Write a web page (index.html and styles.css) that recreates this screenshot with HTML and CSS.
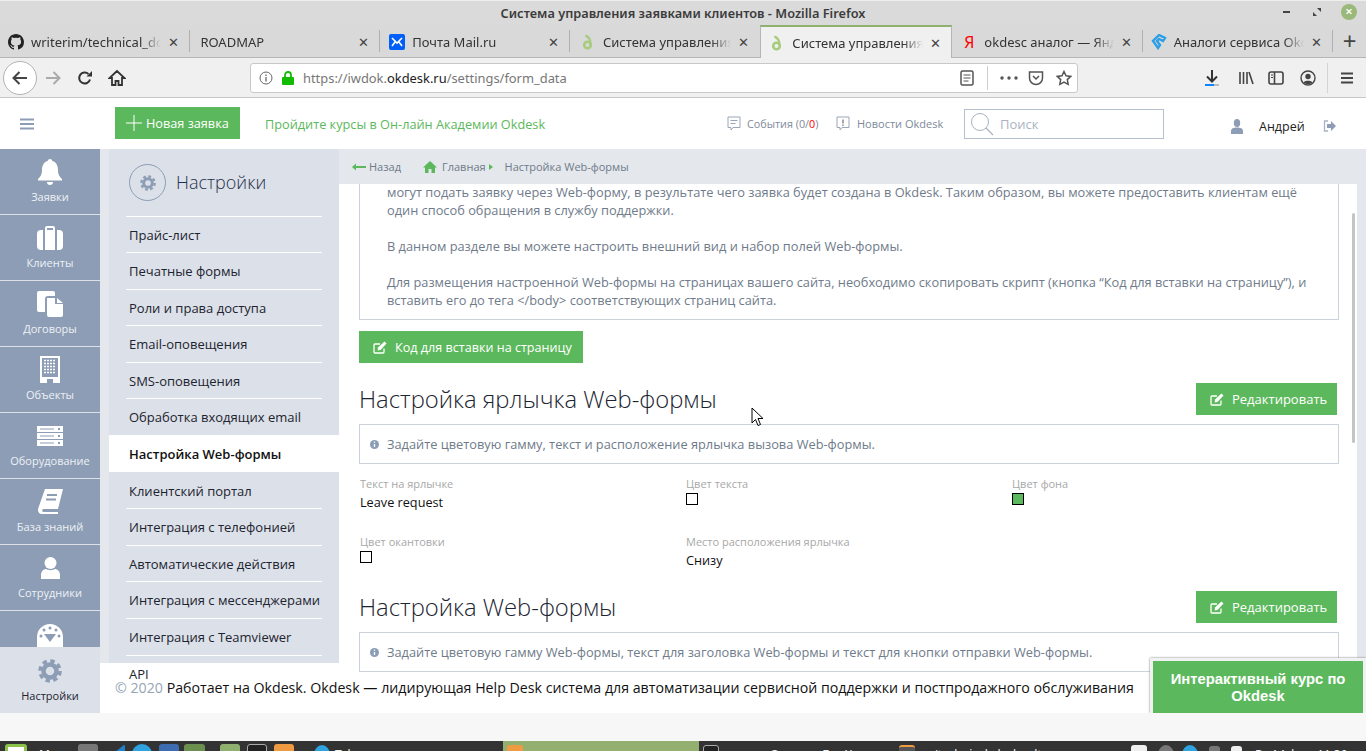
FILE: index.html
```html
<!DOCTYPE html>
<html lang="ru">
<head>
    <meta charset="UTF-8">
    <meta name="viewport" content="width=device-width, initial-scale=1.0">
    <title>Система управления заявками клиентов</title>
    <link rel="stylesheet" href="styles.css">
</head>
<body>
    <!-- Firefox -->
    <div class="titlebar">
        <span class="titlebar-text">Система управления заявками клиентов - Mozilla Firefox</span>
        <div class="win-btns">
            <svg width="12" height="12" viewBox="0 0 12 12"><path d="M2 6h7" stroke="#444" stroke-width="2"/></svg>
            <svg width="12" height="12" viewBox="0 0 12 12"><path d="M6 2h4v4zM2 6v4h4z" fill="#444"/></svg>
            <span class="win-close">×</span>
        </div>
    </div>
    <div class="tabs">
        <div class="tab">
            <svg class="fav" viewBox="0 0 16 16"><path fill="#222" d="M8 0C3.6 0 0 3.6 0 8c0 3.5 2.3 6.5 5.5 7.6.4.1.5-.2.5-.4v-1.4c-2.2.5-2.7-1-2.7-1-.4-.9-.9-1.2-.9-1.2-.7-.5.1-.5.1-.5.8.1 1.2.8 1.2.8.7 1.2 1.9.9 2.3.7.1-.5.3-.9.5-1.1-1.8-.2-3.6-.9-3.6-4 0-.9.3-1.6.8-2.1-.1-.2-.4-1 .1-2.1 0 0 .7-.2 2.2.8a7.600 7.600 0 0 1 4 0c1.500-1 2.200-.8 2.200-.8.400 1.100.200 1.900.100 2.100.500.600.800 1.300.800 2.100 0 3.100-1.900 3.700-3.700 3.900.300.300.600.800.600 1.500v2.200c0 .200.100.500.600.400A8 8 0 0 0 16 8c0-4.400-3.600-8-8-8z"/></svg>
            <span class="tab-title">writerim/technical_documentation</span><span class="tab-x">✕</span>
        </div>
        <div class="tab">
            <span class="tab-title">ROADMAP</span><span class="tab-x">✕</span>
        </div>
        <div class="tab">
            <svg class="fav" viewBox="0 0 16 16"><rect width="16" height="16" rx="2" fill="#005ff9"/><path d="M3 4l5 5 5-5M3 12l3-4M13 12l-3-4" stroke="#fff" stroke-width="1.600" fill="none"/></svg>
            <span class="tab-title">Почта Mail.ru</span><span class="tab-x">✕</span>
        </div>
        <div class="tab">
            <svg class="fav" viewBox="0 0 16 16"><circle cx="7.500" cy="11" r="3.300" fill="none" stroke="#a6cc7c" stroke-width="2.600"/><path d="M5.500 .5c4 1 6.500 4.500 6 10.500h-2c.5-4-1.500-7-4.500-8.500z" fill="#a6cc7c"/></svg>
            <span class="tab-title">Система управления заявками</span><span class="tab-x">✕</span>
        </div>
        <div class="tab tab-active">
            <svg class="fav" viewBox="0 0 16 16"><circle cx="7.500" cy="11" r="3.300" fill="none" stroke="#a6cc7c" stroke-width="2.600"/><path d="M5.500 .5c4 1 6.500 4.500 6 10.500h-2c.5-4-1.500-7-4.500-8.500z" fill="#a6cc7c"/></svg>
            <span class="tab-title">Система управления заявками</span><span class="tab-x">✕</span>
        </div>
        <div class="tab">
            <span class="fav fav-ya">Я</span>
            <span class="tab-title">okdesc аналог — Яндекс</span><span class="tab-x">✕</span>
        </div>
        <div class="tab">
            <svg class="fav" viewBox="0 0 16 16"><path d="M8 1L2 7l5 7 2-3-3-4 2-2 4 2 2-3z" fill="none" stroke="#2b9fe6" stroke-width="2.400"/></svg>
            <span class="tab-title">Аналоги сервиса Okdesk</span><span class="tab-x">✕</span>
        </div>
        <span class="tab-new">+</span>
    </div>
    <div class="toolbar">
        <span class="back-btn">
            <svg width="18" height="18" viewBox="0 0 18 18"><path d="M16 9H3M8.500 3L2.500 9l6 6" fill="none" stroke="#444" stroke-width="2"/></svg>
        </span>
        <svg class="tool-forward" width="18" height="18" viewBox="0 0 18 18"><path d="M2 9h13M9.500 3l6 6-6 6" fill="none" stroke="#aaa" stroke-width="2"/></svg>
        <svg class="tool-reload" width="16" height="16" viewBox="0 0 16 16"><path d="M13 9.500A5.500 5.500 0 1 1 11.500 4" fill="none" stroke="#333" stroke-width="2"/><path d="M9.500 6.500H15V1z" fill="#333"/></svg>
        <svg class="tool-home" width="18" height="18" viewBox="0 0 18 18"><path d="M9 2L1.500 9H4v7h3.500v-4h3v4H14V9h2.500z" fill="none" stroke="#333" stroke-width="1.800"/></svg>
        <div class="urlbar">
            <svg class="url-info" width="14" height="14" viewBox="0 0 14 14"><circle cx="7" cy="7" r="6" fill="none" stroke="#666"/><path d="M7 6v4.500M7 3.500v1.500" stroke="#666" stroke-width="1.300"/></svg>
            <svg class="url-lock" width="12" height="14" viewBox="0 0 12 14"><rect y="6" width="12" height="8" rx="1" fill="#12bc00"/><path d="M3 6V4a3 3 0 0 1 6 0v2" fill="none" stroke="#12bc00" stroke-width="1.800"/></svg>
            <span class="url-text">https://iwdok.<b>okdesk.ru</b>/settings/form_data</span>
            <svg class="url-reader" width="14" height="16" viewBox="0 0 14 16"><rect x="1" y="1" width="12" height="14" rx="1.500" fill="none" stroke="#555" stroke-width="1.500"/><path d="M3.500 5h7M3.500 8h7M3.500 11h5" stroke="#555"/></svg>
            <span class="url-sep"></span>
            <svg class="url-dots" width="18" height="4" viewBox="0 0 18 4"><circle cx="2" cy="2" r="1.700" fill="#555"/><circle cx="9" cy="2" r="1.700" fill="#555"/><circle cx="16" cy="2" r="1.700" fill="#555"/></svg>
            <svg class="url-pocket" width="16" height="16" viewBox="0 0 16 16"><path d="M1.500 2h13v6a6.500 6.500 0 0 1-13 0z" fill="none" stroke="#555" stroke-width="1.500"/><path d="M5 6l3 3 3-3" fill="none" stroke="#555" stroke-width="1.500"/></svg>
            <svg class="url-star" width="16" height="16" viewBox="0 0 16 16"><path d="M8 1.500l2 4.300 4.700.6-3.400 3.200.9 4.700L8 12l-4.200 2.300.9-4.700L1.300 6.400 6 5.800z" fill="none" stroke="#555" stroke-width="1.500"/></svg>
        </div>
        <div class="tool-right">
            <svg width="16" height="20" viewBox="0 0 16 20"><path d="M8 2v11M3 8.500l5 5 5-5" fill="none" stroke="#333" stroke-width="2"/><path d="M1 17h9" stroke="#0a84ff" stroke-width="2"/><path d="M10 17h5" stroke="#bbb" stroke-width="2"/></svg>
            <svg width="16" height="16" viewBox="0 0 16 16"><path d="M2 2v12M5.500 2v12M9 2v12M11 2l4 12" stroke="#444" stroke-width="1.600" fill="none"/></svg>
            <svg width="16" height="16" viewBox="0 0 16 16"><rect x="1" y="2" width="14" height="12" rx="2" fill="none" stroke="#444" stroke-width="1.600"/><path d="M6.500 2v12" stroke="#444" stroke-width="1.600"/><path d="M3 5h2M3 7.500h2" stroke="#444"/></svg>
            <svg width="16" height="16" viewBox="0 0 16 16"><circle cx="8" cy="8" r="7" fill="none" stroke="#444" stroke-width="1.400"/><circle cx="8" cy="6.500" r="2.700" fill="#444"/><path d="M3.500 12.500c1-2.500 8-2.500 9 0-2 2-7 2-9 0z" fill="#444"/></svg>
            <span class="tool-sep"></span>
            <svg width="14" height="14" viewBox="0 0 14 14"><path d="M1 2.500h12M1 7h12M1 11.500h12" stroke="#444" stroke-width="1.800"/></svg>
        </div>
    </div>

    <!-- Okdesk -->
    <header class="app-header">
        <svg class="burger" width="14" height="12" viewBox="0 0 14 12"><path d="M0 1.500h14M0 6h14M0 10.500h14" stroke="#8c9db5" stroke-width="2.200"/></svg>
        <a class="btn btn-new">
            <svg width="16" height="16" viewBox="0 0 16 16"><path d="M8 0v16M0 8h16" stroke="#fff"/></svg>
            Новая заявка
        </a>
        <a class="academy-link">Пройдите курсы в Он-лайн Академии Okdesk</a>
        <span class="top-link top-events">
            <svg width="14" height="16" viewBox="0 0 14 16"><path d="M1 1h12v10.500H6L4 14v-2.500H1z" fill="none" stroke="#9aa7b8"/><path d="M3.500 4.500h7M3.500 7.500h5" stroke="#9aa7b8"/></svg>
            События (0/<span class="red">0</span>)
        </span>
        <span class="top-link top-news">
            <svg width="14" height="16" viewBox="0 0 14 16"><path d="M1 1h12v10.500H6L4 14v-2.500H1z" fill="none" stroke="#9aa7b8"/><path d="M7 3.500v4M7 8.500v1.500" stroke="#778" stroke-width="1.300"/></svg>
            Новости Okdesk
        </span>
        <div class="search">
            <svg width="24" height="24" viewBox="0 0 24 24"><circle cx="10" cy="10" r="8.500" fill="none" stroke="#a8b3c2"/><path d="M16 16l7 7" stroke="#a8b3c2" stroke-width="1.300"/></svg>
            <span>Поиск</span>
        </div>
        <svg class="user-icon" width="12" height="15" viewBox="0 0 12 15"><ellipse cx="6" cy="4" rx="3.200" ry="4" fill="#8c9db5"/><path d="M0 15v-3c0-2.500 2.500-3.500 6-3.500s6 1 6 3.500v3z" fill="#8c9db5"/></svg>
        <span class="user-name">Андрей</span>
        <svg class="logout" width="13" height="12" viewBox="0 0 13 12"><path d="M5 1H1.500v10H5" fill="none" stroke="#a8b3c2" stroke-width="1.300"/><path d="M4 4h4V1l5 5-5 5V8H4z" fill="#8c9db5"/></svg>
    </header>

    <div class="app-main">
        <nav class="side-nav">
            <div class="nav-list">
                <a class="nav-item">
                    <span class="nav-icon"><svg width="24" height="26" viewBox="0 0 24 26"><path fill="#fff" d="M12 0a2.500 2.500 0 0 1 2.400 2C18.500 3 20 7 20 11c0 5 2 7 4 9v1.500H0V20c2-2 4-4 4-9 0-4 1.500-8 5.600-9A2.500 2.500 0 0 1 12 0zM9 23h6a3 3 0 0 1-6 0z"/></svg></span>
                    <span>Заявки</span>
                </a>
                <a class="nav-item">
                    <span class="nav-icon"><svg width="26" height="24" viewBox="0 0 26 24"><path fill="#fff" fill-rule="evenodd" d="M4 4h2v20H4a4 4 0 0 1-4-4V8a4 4 0 0 1 4-4zM22 4a4 4 0 0 1 4 4v12a4 4 0 0 1-4 4h-2V4zM8 4V2a2 2 0 0 1 2-2h6a2 2 0 0 1 2 2v22H8zM10 2v2h6V2z"/></svg></span>
                    <span>Клиенты</span>
                </a>
                <a class="nav-item">
                    <span class="nav-icon"><svg width="26" height="26" viewBox="0 0 26 26"><path fill="#fff" d="M2 0h14a2 2 0 0 1 2 2v3h-7a3 3 0 0 0-3 3v13H2a2 2 0 0 1-2-2V2a2 2 0 0 1 2-2zM10 7h8v6h8v11a2 2 0 0 1-2 2H12a2 2 0 0 1-2-2zM20 7l6 5h-6z"/></svg></span>
                    <span>Договоры</span>
                </a>
                <a class="nav-item">
                    <span class="nav-icon"><svg width="20" height="27" viewBox="0 0 20 27"><path fill="#fff" fill-rule="evenodd" d="M0 0h20v27H13v-4H7v4H0zM2 2v19h16V2z"/><path d="M4 4.500h12M4 7.500h12M4 10.500h12M4 13.500h12M4 16.500h12" stroke="#fff" stroke-width="1.600" stroke-dasharray="2 1"/></svg></span>
                    <span>Объекты</span>
                </a>
                <a class="nav-item">
                    <span class="nav-icon"><svg width="26" height="20" viewBox="0 0 26 20"><path fill="#fff" fill-rule="evenodd" d="M0 0h26v6H0zM3 2.500v1h14v-1zM21 2v2h2V2zM0 7h26v6H0zM3 9.500v1h14v-1zM21 9v2h2V9zM0 14h26v6H0zM3 16.500v1h14v-1zM21 16v2h2v-2z"/></svg></span>
                    <span>Оборудование</span>
                </a>
                <a class="nav-item">
                    <span class="nav-icon"><svg width="25" height="25" viewBox="0 0 25 25"><path fill="#fff" fill-rule="evenodd" d="M7 0h18l-5 20H5a2 2 0 0 0 0 3h15v2H4c-3 0-4-2-4-4 0-1 .2-1.500.5-2.500zM9 5v2h10V5zM8 9.500v2h10v-2z"/></svg></span>
                    <span>База знаний</span>
                </a>
                <a class="nav-item">
                    <span class="nav-icon"><svg width="19" height="22" viewBox="0 0 19 22"><ellipse cx="9.500" cy="6" rx="6" ry="6" fill="#fff"/><path d="M0 22v-4c0-4 3-6 5-6 2 1.500 7 1.500 9 0 2 0 5 2 5 6v4z" fill="#fff"/></svg></span>
                    <span>Сотрудники</span>
                </a>
                <a class="nav-item">
                    <span class="nav-icon"><svg class="gauge" width="26" height="26" viewBox="0 0 26 26"><path fill="#fff" fill-rule="evenodd" d="M13 0a13 13 0 0 1 13 13v10H0V13A13 13 0 0 1 13 0zM7 10l6 8 6-8z"/><g fill="#8c9db5"><circle cx="13" cy="4" r="1.500"/><circle cx="7" cy="6" r="1.500"/><circle cx="19" cy="6" r="1.500"/><circle cx="4" cy="12" r="1.500"/><circle cx="22" cy="12" r="1.500"/></g></svg></span>
                    <span>Отчёты</span>
                </a>
            </div>
            <a class="nav-item nav-settings">
                <span class="nav-icon">
                    <svg width="24" height="24" viewBox="0 0 24 24"><circle cx="12" cy="12" r="10" fill="none" stroke="#8c9db5" stroke-width="3.500" stroke-dasharray="4.400 3.450"/><circle cx="12" cy="12" r="6.500" fill="none" stroke="#8c9db5" stroke-width="4.500"/></svg>
                </span>
                <span>Настройки</span>
            </a>
        </nav>

        <div class="main-right">
            <div class="main-top">
                <aside class="sub-nav">
                    <div class="sub-head">
                        <span class="sub-circle">
                            <svg width="16" height="16" viewBox="0 0 24 24"><circle cx="12" cy="12" r="10" fill="none" stroke="#8c9db5" stroke-width="3.500" stroke-dasharray="4.400 3.450"/><circle cx="12" cy="12" r="6.500" fill="none" stroke="#8c9db5" stroke-width="4.500"/></svg>
                        </span>
                        <span class="sub-title">Настройки</span>
                    </div>
                    <ul class="sub-list">
                        <li>Прайс-лист</li>
                        <li>Печатные формы</li>
                        <li>Роли и права доступа</li>
                        <li>Email-оповещения</li>
                        <li>SMS-оповещения</li>
                        <li>Обработка входящих email</li>
                        <li class="active">Настройка Web-формы</li>
                        <li class="after-active">Клиентский портал</li>
                        <li>Интеграция с телефонией</li>
                        <li>Автоматические действия</li>
                        <li>Интеграция с мессенджерами</li>
                        <li>Интеграция с Teamviewer</li>
                        <li>API</li>
                    </ul>
                </aside>

                <div class="content-col">
                    <div class="breadcrumbs">
                        <svg class="crumb-back" width="14" height="8" viewBox="0 0 14 8"><path d="M14 4H2" stroke="#5cb85c" stroke-width="2"/><path d="M0 4l4-3.500v7z" fill="#5cb85c"/></svg>
                        <span class="crumb-label">Назад</span>
                        <svg class="crumb-home" width="14" height="12" viewBox="0 0 14 12"><path d="M7 0L0 6.500h2V12h3.500V8h3v4H12V6.500h2z" fill="#5cb85c"/></svg>
                        <span class="crumb-label">Главная</span>
                        <svg class="crumb-arrow" width="4" height="6" viewBox="0 0 4 6"><path d="M0 0l4 3-4 3z" fill="#5cb85c"/></svg>
                        <span class="crumb-label">Настройка Web-формы</span>
                    </div>
                    <div class="content">
                        <div class="intro-box">
                            <p>могут подать заявку через Web-форму, в результате чего заявка будет создана в Okdesk. Таким образом, вы можете предоставить клиентам ещё<br>один способ обращения в службу поддержки.</p>
                            <p>В данном разделе вы можете настроить внешний вид и набор полей Web-формы.</p>
                            <p>Для размещения настроенной Web-формы на страницах вашего сайта, необходимо скопировать скрипт (кнопка “Код для вставки на страницу”), и<br>вставить его до тега &lt;/body&gt; соответствующих страниц сайта.</p>
                        </div>
                        <a class="btn btn-code">
                            <svg width="14" height="13" viewBox="0 0 14 13"><path d="M11 7.500V11a1 1 0 0 1-1 1H2a1 1 0 0 1-1-1V4a1 1 0 0 1 1-1h5" fill="none" stroke="#fff" stroke-width="1.300"/><path d="M5 6.500l6.500-6 2 2-6 6.500-2.800.6z" fill="#fff"/></svg>
                            Код для вставки на страницу
                        </a>

                        <div class="section-head first">
                            <h2>Настройка ярлычка Web-формы</h2>
                            <a class="btn btn-edit">
                                <svg width="14" height="13" viewBox="0 0 14 13"><path d="M11 7.500V11a1 1 0 0 1-1 1H2a1 1 0 0 1-1-1V4a1 1 0 0 1 1-1h5" fill="none" stroke="#fff" stroke-width="1.300"/><path d="M5 6.500l6.500-6 2 2-6 6.500-2.800.6z" fill="#fff"/></svg>
                                Редактировать
                            </a>
                        </div>
                        <div class="info-box">
                            <svg width="9" height="9" viewBox="0 0 9 9"><circle cx="4.500" cy="4.500" r="4.500" fill="#8c9db5"/><path d="M4.500 4v3M4.500 1.500v1.300" stroke="#fff" stroke-width="1.300"/></svg>
                            Задайте цветовую гамму, текст и расположение ярлычка вызова Web-формы.
                        </div>
                        <div class="fields">
                            <div class="field">
                                <div class="field-label">Текст на ярлычке</div>
                                <div class="field-value">Leave request</div>
                            </div>
                            <div class="field">
                                <div class="field-label">Цвет текста</div>
                                <div class="swatch"></div>
                            </div>
                            <div class="field">
                                <div class="field-label">Цвет фона</div>
                                <div class="swatch swatch-green"></div>
                            </div>
                            <div class="field">
                                <div class="field-label">Цвет окантовки</div>
                                <div class="swatch"></div>
                            </div>
                            <div class="field">
                                <div class="field-label">Место расположения ярлычка</div>
                                <div class="field-value">Снизу</div>
                            </div>
                        </div>

                        <div class="section-head">
                            <h2>Настройка Web-формы</h2>
                            <a class="btn btn-edit">
                                <svg width="14" height="13" viewBox="0 0 14 13"><path d="M11 7.500V11a1 1 0 0 1-1 1H2a1 1 0 0 1-1-1V4a1 1 0 0 1 1-1h5" fill="none" stroke="#fff" stroke-width="1.300"/><path d="M5 6.500l6.500-6 2 2-6 6.500-2.800.6z" fill="#fff"/></svg>
                                Редактировать
                            </a>
                        </div>
                        <div class="info-box">
                            <svg width="9" height="9" viewBox="0 0 9 9"><circle cx="4.500" cy="4.500" r="4.500" fill="#8c9db5"/><path d="M4.500 4v3M4.500 1.500v1.300" stroke="#fff" stroke-width="1.300"/></svg>
                            Задайте цветовую гамму Web-формы, текст для заголовка Web-формы и текст для кнопки отправки Web-формы.
                        </div>
                        <span class="scroll-thumb"></span>
                        <svg class="cursor" width="13" height="20" viewBox="0 0 13 20"><path d="M1 1v15l3.500-3.500 2.500 6 2.500-1-2.500-6H12z" fill="#fff" stroke="#000"/></svg>
                    </div>
                </div>
            </div>
            <footer class="app-footer">
                <span class="copy">© 2020</span> Работает на Okdesk. Okdesk — лидирующая Help Desk система для автоматизации сервисной поддержки и постпродажного обслуживания
            </footer>
        </div>
        <div class="course-popup">Интерактивный курс по Okdesk</div>
    </div>

    <div class="page-rest"></div>

    <!-- панель задач -->
    <div class="taskbar">
        <span class="tb-icon tb-mint"></span>
        <span class="tb-text tb-menu">Меню</span>
        <span class="tb-icon tb-gray tb-first"></span>
        <span class="tb-icon tb-vs"></span>
        <span class="tb-icon tb-tg tb-round tb-tele"></span>
        <span class="tb-icon tb-blue"></span>
        <span class="tb-icon tb-green"></span>
        <span class="tb-icon tb-folder tb-group"></span>
        <span class="tb-icon tb-term"></span>
        <span class="tb-icon tb-orange"></span>
        <span class="tb-icon tb-small tb-tg tb-round tb-win"></span>
        <span class="tb-text tb-win-text">Tele</span>
        <span class="tb-task"><span class="tb-icon tb-small tb-orange"></span></span>
        <span class="tb-icon tb-small tb-term tb-task2"></span>
        <span class="tb-text tb-t2">Система Баг-Хелп</span>
        <span class="tb-icon tb-small tb-amber"></span>
        <span class="tb-text tb-t3">/technical_desk.odt</span>
        <span class="tb-icon tb-small tb-white tb-tray"></span>
        <span class="tb-icon tb-small tb-gray tb-round tb-tray2"></span>
        <span class="tb-icon tb-small tb-tg tb-round tb-tray3"></span>
        <span class="tb-icon tb-xs tb-gray"></span>
        <span class="tb-icon tb-xs tb-white"></span>
        <span class="tb-text tb-clock">Вт 14 фев, 11:30</span>
    </div>
</body>
</html>
```

FILE: styles.css
```css
* {
    box-sizing: border-box;
}

html, body {
    margin: 0;
    padding: 0;
    height: 751px;
    overflow: hidden;
}

body {
    font-family: "Open Sans", sans-serif;
    font-size: 13px;
    background-color: #fff;
    color: #000;
}

a {
    text-decoration: none;
}

/* Firefox */
.titlebar {
    height: 25px;
    background-color: #dadada;
    border-top: 1px solid #eee;
    position: relative;
    text-align: center;
    font-family: "Noto Sans", sans-serif;
    font-size: 12.780px;
    font-weight: 600;
    line-height: 25px;
    color: #3c3c3c;
}

.win-btns {
    position: absolute;
    top: 3px;
    right: 9px;
    display: flex;
    align-items: center;
    gap: 18px;
    height: 16px;
}

.win-close {
    width: 16px;
    height: 16px;
    border-radius: 50%;
    background-color: #9ab87a;
    color: #fff;
    font-size: 13px;
    line-height: 15px;
}

.tabs {
    display: flex;
    height: 33px;
    background-color: #d9d9d9;
    border-bottom: 1px solid #b5b5b5;
    font-family: "Noto Sans", sans-serif;
    font-size: 13px;
    color: #333;
}

.tab {
    width: 190.400px;
    height: 33px;
    padding: 0 10px 0 8px;
    display: flex;
    align-items: center;
    gap: 7px;
    position: relative;
}

.tab::after {
    content: "";
    position: absolute;
    right: 0;
    top: 5px;
    bottom: 6px;
    width: 1px;
    background-color: #b0b0b0;
}

.tab:nth-child(4)::after, .tab-active::after {
    display: none;
}

.tab:nth-child(3) {
    padding-left: 9px;
}

.tab:nth-child(4) {
    padding-left: 10px;
}

.tab:nth-child(6) {
    padding-left: 9px;
}

.tab-active {
    background-color: #f0f0f0;
    border-top: 2px solid #8fb06f;
    border-left: 1px solid #b5b5b5;
    border-right: 1px solid #b5b5b5;
    height: 33px;
    width: 192px;
    padding-right: 9px;
    z-index: 1;
}

.fav {
    width: 16px;
    height: 16px;
    flex: none;
}

.fav-ya {
    color: #f00;
    font-size: 16px;
    line-height: 16px;
    text-align: center;
}

.tab-title {
    flex: 1;
    white-space: nowrap;
    overflow: hidden;
    -webkit-mask-image: linear-gradient(to right, #000 85%, transparent);
    mask-image: linear-gradient(to right, #000 85%, transparent);
}

.tab:nth-child(2) .tab-title {
    margin-left: 2px;
}

.tab-x {
    font-size: 13px;
    color: #444;
    width: 12px;
    flex: none;
}

.tab-new {
    width: 33px;
    text-align: center;
    font-size: 24px;
    line-height: 31px;
    color: #444;
}

.toolbar {
    height: 40px;
    background-color: #f0f0f0;
    border-bottom: 1px solid #c9c9c9;
    position: relative;
    display: flex;
    align-items: center;
    font-family: "Noto Sans", sans-serif;
}

.back-btn {
    width: 34px;
    height: 34px;
    margin-left: 3px;
    border-radius: 50%;
    border: 1px solid #b3b3b3;
    background-color: #fff;
    display: flex;
    align-items: center;
    justify-content: center;
}

.tool-forward {
    margin-left: 7px;
}

.tool-reload {
    margin-left: 15px;
}

.tool-home {
    margin-left: 15px;
}

.urlbar {
    width: 828px;
    height: 30px;
    margin-left: 124px;
    background-color: #fff;
    border: 1px solid #c8c8c8;
    border-radius: 3px;
    display: flex;
    align-items: center;
    padding-left: 8px;
    font-size: 12.900px;
    color: #777;
}

.url-lock {
    margin-left: 9px;
}

.url-text {
    margin-left: 9px;
    width: 640px;
    white-space: nowrap;
}

.url-text b {
    font-weight: 400;
    color: #222;
}

.url-reader {
    margin-left: 17px;
}

.url-sep {
    width: 1px;
    height: 24px;
    margin-left: 13px;
    background-color: #ccc;
}

.url-dots {
    margin-left: 12px;
}

.url-pocket {
    margin-left: 10px;
}

.url-star {
    margin-left: 12px;
}

.tool-right {
    display: flex;
    align-items: center;
    margin-left: 126px;
}

.tool-right > :nth-child(2) {
    margin-left: 18px;
}

.tool-right > :nth-child(3) {
    margin-left: 14px;
}

.tool-right > :nth-child(4) {
    margin-left: 16px;
}

.tool-right > :nth-child(6) {
    margin-left: 12px;
}

.tool-sep {
    width: 1px;
    height: 30px;
    background-color: #d4d4d4;
    margin-left: 11px;
}

/* шапка */
.app-header {
    height: 51px;
    background-color: #fff;
    display: flex;
    align-items: center;
}

.burger {
    margin-left: 20px;
}

.btn {
    display: flex;
    align-items: center;
    height: 32px;
    background-color: #5cb85c;
    color: #fff;
    font-size: 13px;
    white-space: nowrap;
}

.btn-new {
    width: 125px;
    margin-left: 81px;
    padding-left: 11px;
    gap: 4px;
    margin-top: -2px;
    font-size: 12.700px;
}

.academy-link {
    margin-left: 25px;
    width: 300px;
    color: #5cb85c;
    font-size: 12.720px;
}

.top-link {
    display: flex;
    align-items: center;
    gap: 6px;
    font-size: 10.800px;
    color: #7e8a9a;
    white-space: nowrap;
}

.top-events {
    margin-left: 162px;
    width: 109px;
}

.top-news {
    width: 128px;
    gap: 7px;
    font-size: 11px;
}

.red {
    color: #f00;
    margin: 0 -6px 0 -6px;
}

.search {
    width: 200px;
    height: 30px;
    border: 1px solid #b5c0ce;
    display: flex;
    align-items: center;
    padding-left: 5px;
    gap: 6px;
    color: #aab3bf;
    font-size: 13px;
}

.user-icon {
    margin-left: 67px;
    margin-top: 5px;
}

.user-name {
    margin-left: 16px;
    margin-top: 5px;
    font-size: 12.500px;
    color: #222;
    width: 64px;
}

.logout {
    margin-top: 5px;
}

/* основная часть */
.app-main {
    display: flex;
    height: 564px;
    position: relative;
}

.side-nav {
    width: 100px;
    flex: none;
    display: flex;
    flex-direction: column;
    background-color: #8c9db5;
}

.nav-list {
    height: 498px;
    overflow: hidden;
}

.nav-item {
    display: block;
    height: 66px;
    padding-top: 9px;
    border-bottom: 1px solid #dce0e8;
    text-align: center;
    font-size: 11px;
    line-height: 16px;
    color: #eef1f5;
}

.nav-icon {
    display: flex;
    height: 27px;
    margin-bottom: 4px;
    align-items: center;
    justify-content: center;
}

.gauge {
    margin-top: 7px;
}

.nav-settings {
    background-color: #dce0e8;
    color: #1c2430;
    border-bottom: 0;
    padding-top: 10px;
}

.main-right {
    flex: 1;
    display: flex;
    flex-direction: column;
    min-width: 0;
}

.main-top {
    display: flex;
    align-items: flex-start;
    height: 523px;
}

.sub-nav {
    width: 239px;
    height: 514px;
    flex: none;
    background-color: #dce0e8;
    border-left: 9px solid #e4e7ec;
}

.sub-head {
    height: 66.600px;
    padding: 15px 0 0 20px;
    display: flex;
    align-items: flex-start;
    gap: 10px;
}

.sub-circle {
    width: 37px;
    height: 37px;
    border: 1px solid #8c9db5;
    border-radius: 50%;
    display: flex;
    align-items: center;
    justify-content: center;
}

.sub-title {
    font-size: 18px;
    font-weight: 300;
    line-height: 37px;
    color: #1f2f4d;
}

.sub-list {
    list-style: none;
    margin: 0;
    padding: 0;
    font-size: 13px;
    color: #1c2430;
}

.sub-list li {
    height: 36.580px;
    margin: 0 17px;
    padding-left: 3px;
    border-top: 1px solid #fff;
    line-height: 36px;
    white-space: nowrap;
}

.sub-list .active {
    margin: 0;
    padding-left: 20px;
    background-color: #fff;
    font-weight: 600;
    color: #111;
}

.sub-list .after-active {
    border-top-color: transparent;
}

.content-col {
    flex: 1;
    min-width: 0;
    height: 523px;
    display: flex;
    flex-direction: column;
}

.breadcrumbs {
    height: 35px;
    flex: none;
    background-color: #e4e7ec;
    display: flex;
    align-items: center;
    padding-left: 13px;
    font-size: 11px;
    color: #6f7b8a;
}

.crumb-label {
    margin-left: 3px;
}

.crumb-home {
    margin-left: 22px;
}

.crumb-home + .crumb-label {
    margin-left: 5px;
}

.crumb-arrow {
    margin-left: 3px;
}

.crumb-arrow + .crumb-label {
    margin-left: 12px;
}

.content {
    position: relative;
    flex: 1;
    min-height: 0;
    overflow: hidden;
    padding: 0 18px 0 20px;
    border-right: 9px solid #e4e7ec;
}

.intro-box {
    margin-top: -1px;
    height: 137px;
    padding-left: 27px;
    border: 1px solid #cdd3dc;
    border-top: 0;
    font-size: 12.800px;
    line-height: 18px;
    color: #6f7b8a;
    white-space: nowrap;
}

.intro-box p {
    margin: 0 0 18px;
}

.btn-code {
    width: 224px;
    margin-top: 11px;
    padding-left: 14px;
    gap: 8px;
    font-size: 12.600px;
}

.section-head {
    display: flex;
    align-items: center;
    justify-content: space-between;
    padding-right: 2px;
    margin-bottom: 9px;
}

.section-head.first {
    margin-top: 20px;
}

.section-head h2 {
    margin: 0;
    font-size: 23.800px;
    font-weight: 300;
    line-height: 32px;
    color: #1c2430;
    white-space: nowrap;
}

.btn-edit {
    width: 141px;
    padding-left: 14px;
    gap: 8px;
}

.info-box {
    height: 40px;
    border: 1px solid #cdd3dc;
    padding-left: 10px;
    display: flex;
    align-items: center;
    gap: 8px;
    font-size: 12.800px;
    color: #6f7b8a;
}

.fields {
    display: grid;
    grid-template-columns: repeat(3, 326px);
    grid-template-rows: 58px 56px;
    margin: 13px 0 0 1px;
}

.field-label {
    font-size: 11px;
    line-height: 14px;
    color: #a8a8a8;
}

.field-value {
    margin-top: 2px;
    font-size: 12.700px;
    line-height: 18px;
    color: #111;
}

.swatch {
    width: 12px;
    height: 12px;
    margin-top: 2px;
    border: 1px solid #000;
    background-color: #fff;
}

.swatch-green {
    background-color: #5cb85c;
}

.scroll-thumb {
    position: absolute;
    top: 29px;
    right: 2px;
    width: 3px;
    height: 230px;
    background-color: #c4c4c4;
    border-radius: 2px;
}

.cursor {
    position: absolute;
    left: 412px;
    top: 223px;
}

.app-footer {
    height: 41px;
    padding: 7px 0 0 15px;
    font-size: 14.190px;
    line-height: 18px;
    color: #111;
    white-space: nowrap;
}

.copy {
    color: #97a5b8;
}

.course-popup {
    position: absolute;
    right: 0;
    bottom: 0;
    width: 216px;
    height: 55px;
    padding: 10px 14px 0;
    background-color: #5cb85c;
    border: 3px solid #eff1f2;
    border-bottom: 0;
    box-shadow: 0 0 2px #777;
    color: #fff;
    font-family: "Liberation Sans", Arial, sans-serif;
    font-size: 14.800px;
    font-weight: 700;
    line-height: 17px;
    text-align: center;
}

.page-rest {
    height: 28px;
    background-color: #f7f7f7;
    position: relative;
}

/* панель задач */
.taskbar {
    height: 10px;
    background-color: #333;
    display: flex;
    overflow: hidden;
    font-family: "Noto Sans", sans-serif;
    font-size: 12px;
    color: #eee;
    position: relative;
}

.tb-icon {
    flex: none;
    width: 20px;
    height: 20px;
    margin-top: 3px;
    border-radius: 3px;
}

.tb-small {
    width: 16px;
    margin-top: 4px;
}

.tb-xs {
    width: 11px;
    margin-top: 5px;
    margin-left: 11px;
}

.tb-round {
    border-radius: 50%;
}

.tb-text {
    flex: none;
    line-height: 20px;
    margin-top: 4px;
    white-space: nowrap;
}

.tb-mint {
    width: 22px;
    margin-left: 5px;
    background-color: #fff;
    border: 3px solid #8bc34a;
}

.tb-menu {
    margin-left: 12px;
    width: 39px;
}

.tb-gray {
    background-color: #777;
}

.tb-vs {
    margin-left: 7px;
    background-color: #1f7fc9;
    clip-path: polygon(0 45%, 45% 45%, 100% 0, 100% 100%, 0 100%);
}

.tb-tg {
    background-color: #2fa3e0;
}

.tb-tele {
    margin-left: 7px;
}

.tb-blue {
    margin-left: 7px;
    background-color: #3d6cb0;
}

.tb-green {
    margin-left: 5px;
    width: 21px;
    background-color: #6b8f4e;
}

.tb-folder {
    margin-left: 15px;
    background-color: #8fb06f;
}

.tb-term {
    margin-left: 7px;
    background-color: #222;
    border: 1px solid #aaa;
}

.tb-orange {
    margin-left: 7px;
    background-color: #f09a42;
}

.tb-win {
    margin-left: 20px;
}

.tb-win-text {
    margin-left: 5px;
    width: 168px;
}

.tb-task {
    width: 196px;
    height: 10px;
    flex: none;
    background-color: #93b071;
    display: flex;
}

.tb-task .tb-orange {
    margin-left: 4px;
}

.tb-task2 {
    margin-left: 4px;
}

.tb-t2 {
    margin-left: 51px;
    width: 129px;
}

.tb-amber {
    margin-left: 0;
    background-color: #555;
    border-top: 2px solid #f09a42;
}

.tb-t3 {
    margin-left: 18px;
    width: 198px;
    overflow: hidden;
}

.tb-white {
    background-color: #eee;
}

.tb-tray2 {
    margin-left: 11px;
}

.tb-tray3 {
    margin-left: 8px;
}

.tb-clock {
    margin-left: 13px;
}
```
